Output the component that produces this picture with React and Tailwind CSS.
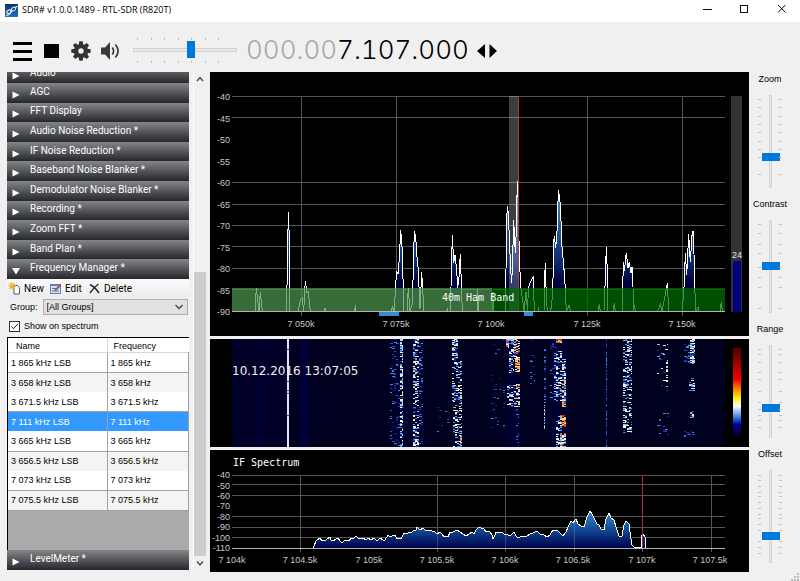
import React from "react";

const UI = "font-['Roboto','Noto_Sans',sans-serif]";

/* ---------- data ---------- */

const PLUGINS = [
  "AGC",
  "FFT Display",
  "Audio Noise Reduction *",
  "IF Noise Reduction *",
  "Baseband Noise Blanker *",
  "Demodulator Noise Blanker *",
  "Recording *",
  "Zoom FFT *",
  "Band Plan *",
];

const ENTRIES = [
  ["1 865 kHz LSB", "1 865 kHz"],
  ["3 658 kHz LSB", "3 658 kHz"],
  ["3 671.5 kHz LSB", "3 671.5 kHz"],
  ["7 111 kHz LSB", "7 111 kHz"],
  ["3 665 kHz LSB", "3 665 kHz"],
  ["3 656.5 kHz LSB", "3 656.5 kHz"],
  ["7 073 kHz LSB", "7 073 kHz"],
  ["7 075.5 kHz LSB", "7 075.5 kHz"],
];
const SELECTED = 3;

const SLIDERS = [
  { label: "Zoom", value: 31, ticks: [4, 12, 21, 29, 37, 46, 54, 62, 79] },
  { label: "Contrast", value: 51, ticks: [4, 13, 24, 33, 47, 57, 67, 88] },
  { label: "Range", value: 30, ticks: [4, 9, 17, 27, 34, 46, 57, 64, 70, 75, 82] },
  { label: "Offset", value: 26, ticks: [5, 10, 16, 22, 26, 32, 38, 44, 48, 54, 60, 71, 77, 83] },
];

const FFT_TRACE =
  "22,239 45,239 46.3,216 49,239 50.3,220 52.3,239 76.5,239 77.3,198 78.3,140 79.5,170 80,239 88.3,239 90.3,228 92.3,226 93.7,239 95.3,209 97,221 98.3,220 100.3,239 114.5,239 115,236 116,239 144.7,239 145.3,233 146,239 181.5,239 182.3,235 184.3,239 185.7,211 186.7,200 188,202 189.3,186 190.7,158 192,175 192.7,198 193.7,228 194,239 197,239 198.3,216 200,239 202.3,232 203.3,198 204.3,159 205.7,165 207,185 208.3,198 209,215 210,237 211.7,200 212.7,218 214,239 236.6,239 237.3,237 238,239 240.4,239 241,215 242.3,163 243.7,191 245,183 246.7,198 247.7,216 249,205 250.3,182 251.3,211 252.3,239 267,239 267.7,217 268.7,239 282,239 283,220 283.7,239 295.3,239 296,198 296.7,148 297.3,134 298.3,141 299.3,165 300.7,198 301.7,211 302.7,185 303.7,148 305.3,181 306.3,158 307.3,109 308.3,131 309.3,185 310.7,215 312.7,228 314,239 316,220 317.5,239 318.5,215 320,211 323.3,204 324.3,239 328,239 328.5,235 329,239 334,239 334.7,205 335.3,191 336.3,225 337.3,239 340.7,239 342.3,226 343.3,198 343.7,171 344.3,164 345.7,176 347.3,155 348.3,118 349.7,125 350.7,141 352,175 354.7,205 356.3,239 357.5,237 359,233 360.5,239 388.3,239 389.3,232 390.3,239 394,239 395.3,207 396.3,175 397.7,208 398,239 403.3,239 404.3,231 405.3,239 412.3,239 413.3,190 414.3,199 416.3,181 418,196 419.3,190 421,201 422,195 423,215 423.3,239 424.5,235 425.5,239 447.5,239 449,236 450.3,232 452,239 454.3,228 457.3,211 458.7,239 472.3,239 474.3,211 475.3,181 476.7,203 478.7,162 480.3,190 482.3,159 483.7,160 484.3,203 485.7,239 488,235 489,239 510,239 511.3,230 512.3,239 515,239";

const IF_TRACE =
  "103,98 104,96 106,91 110,88 112,91 116,90 120,87 121,90 123,91 126,89 128,88 130,91 132,93 134,91 137,90 139,91 141,88 143,89 146,86 148,88 150,89 153,88 156,90 158,88 161,90 164,88 167,91 170,88 173,90 175,90 178,85 180,87 182,86 185,85 187,89 189,88 191,89 194,83 196,84 198,83 202,82 204,80 206,80 207,77 210,80 213,78 216,81 219,80 222,81 225,82 227,84 230,82 232,84 234,87 236,86 238,87 240,82 243,82 247,80 250,82 253,84 256,86 259,84 262,82 264,84 266,80 269,77 271,78 274,79 276,82 278,81 280,82 282,85 283,89 285,85 286,82 290,83 292,82 295,85 297,84 299,86 301,85 304,82 306,86 308,88 312,86 317,86 320,84 323,83 327,81 330,84 333,84 337,87 340,85 343,80 347,80 350,83 353,86 356,82 358,77 361,71 363,73 366,69 368,74 371,76 374,77 377,67 380,61 382,64 384,68 387,74 389,75 391,79 394,80 396,69 399,63 401,68 404,70 406,77 409,86 412,86 414,75 416,71 419,74 420,82 422,95 424,97 431,97 431,86 433,84 435,87 436,98";

/* Waterfall signals: [x0, x1, y0, y1, density, palette] */
const COOL = ["#1c2f9c", "#2b55c8", "#101c78", "#4c86e0"];
const BRIGHT = ["#d8ecff", "#8fc4f4", "#3d78dc", "#ffffff", "#1b2fa4", "#5fa4ee", "#e9e9b0"];
const WARM = ["#ffffff", "#f4b46a", "#8fc4f4", "#e8491f", "#d8ecff", "#2b55c8", "#ffd65c"];
const HOT = ["#ff9d3c", "#e8491f", "#ffd65c", "#ffffff", "#c62f14", "#f4b46a"];
const SIGNALS = [
  [180, 190, 0, 108, 0.13, COOL],
  [190, 193, 0, 108, 0.62, BRIGHT],
  [203, 209, 0, 52, 0.5, BRIGHT],
  [203, 209, 52, 76, 0.22, BRIGHT],
  [203, 209, 76, 108, 0.55, BRIGHT],
  [209, 213, 0, 108, 0.18, COOL],
  [203, 206, 62, 67, 0.4, HOT],
  [242, 248, 0, 22, 0.65, BRIGHT],
  [242, 252, 22, 62, 0.34, BRIGHT],
  [243, 252, 62, 108, 0.38, BRIGHT],
  [250, 252, 96, 108, 0.7, WARM],
  [225, 240, 55, 100, 0.02, COOL],
  [281, 295, 0, 90, 0.04, COOL],
  [296, 299, 0, 9, 0.9, WARM],
  [299, 304, 0, 34, 0.4, BRIGHT],
  [304, 310, 0, 20, 0.55, WARM],
  [305, 310, 20, 33, 0.7, HOT],
  [297, 304, 46, 68, 0.42, BRIGHT],
  [304, 310, 45, 68, 0.5, WARM],
  [306, 309, 68, 108, 0.22, COOL],
  [320, 325, 0, 45, 0.1, COOL],
  [334, 336, 10, 90, 0.35, COOL],
  [334, 335, 66, 90, 0.7, BRIGHT],
  [340, 347, 0, 60, 0.12, COOL],
  [346, 352, 0, 4, 0.8, HOT],
  [344, 352, 12, 62, 0.38, BRIGHT],
  [352, 356, 20, 40, 0.6, BRIGHT],
  [352, 356, 38, 68, 0.7, WARM],
  [350, 356, 76, 88, 0.7, HOT],
  [346, 352, 76, 108, 0.35, BRIGHT],
  [350, 356, 94, 108, 0.75, WARM],
  [396, 397, 0, 108, 0.75, COOL],
  [413, 422, 0, 50, 0.45, BRIGHT],
  [413, 422, 50, 95, 0.36, BRIGHT],
  [447, 458, 5, 50, 0.05, BRIGHT],
  [456, 458, 22, 52, 0.45, BRIGHT],
  [447, 459, 74, 96, 0.08, COOL],
  [474, 480, 5, 25, 0.25, COOL],
  [480, 485, 0, 25, 0.72, BRIGHT],
  [479, 485, 39, 52, 0.35, BRIGHT],
  [480, 484, 72, 80, 0.5, BRIGHT],
  [474, 485, 90, 98, 0.12, COOL],
];

function buildSpeckles() {
  let seed = 20161210;
  const rnd = () => {
    seed = (seed * 1664525 + 1013904223) % 4294967296;
    return seed / 4294967296;
  };
  const out = [];
  SIGNALS.forEach(([x0, x1, y0, y1, density, colors]) => {
    for (let y = y0; y < y1; y += 1) {
      for (let x = x0; x < x1; x += 2) {
        if (rnd() < density) {
          const w = Math.min(x1 - x, rnd() < 0.4 ? 3 : 2);
          out.push([x, y, w, colors[Math.floor(rnd() * colors.length)]]);
        }
      }
    }
  });
  return out;
}
const SPECKLES = buildSpeckles();

/* ---------- icons ---------- */

const LogoIcon = () => (
  <svg viewBox="0 0 13 13" className="h-[13px] w-[13px]" aria-hidden="true">
    <defs>
      <linearGradient id="logo" x1="0" y1="0" x2="0" y2="1">
        <stop offset="0" stopColor="#0b2f6e" />
        <stop offset="1" stopColor="#1c72c4" />
      </linearGradient>
    </defs>
    <rect width="13" height="13" fill="url(#logo)" />
    <g fill="none" stroke="#e4f0fb" strokeWidth="1.1">
      <ellipse cx="4" cy="7.8" rx="2.2" ry="1.700" transform="rotate(-25 4 7.8)" />
      <ellipse cx="8.6" cy="5" rx="2.3" ry="1.700" transform="rotate(-35 8.6 5)" />
      <path d="M1 11.500Q5.500 11 6.500 6.500M10.500 3.500L12.500 2" />
    </g>
  </svg>
);

const GearIcon = () => (
  <svg viewBox="-10 -10 20 20" className="h-5 w-5" aria-hidden="true">
    {[0, 45, 90, 135, 180, 225, 270, 315].map((a) => (
      <path key={a} d="M-2.3 -6 L-1.7 -9.7 H1.7 L2.3 -6 Z" fill="#333" transform={`rotate(${a})`} />
    ))}
    <circle r="4.900" fill="none" stroke="#333" strokeWidth="4.400" />
  </svg>
);

const SpeakerIcon = () => (
  <svg viewBox="0 0 20 20" className="h-5 w-5" aria-hidden="true">
    <path d="M1 6.500h4L10 1v18L5 13.500H1z" fill="#3a3a3a" />
    <path d="M12.3 6.500q2.6 3.500 0 7" fill="none" stroke="#3a3a3a" strokeWidth="1.700" />
    <path d="M15.300 3.500q5.600 6.500 0 13" fill="none" stroke="#3a3a3a" strokeWidth="1.700" />
  </svg>
);

const Triangle = ({ open }) => (
  <svg viewBox="0 0 8 8" className="h-2 w-2" aria-hidden="true">
    <path d={open ? "M0 1H8L4 7.5Z" : "M0.5 0.5L7.5 4L0.5 7.5Z"} fill="#fff" />
  </svg>
);

const Chevron = ({ d }) => (
  <svg viewBox="0 0 8 8" className="h-2 w-2" aria-hidden="true">
    <path d={d} fill="none" stroke="#444" strokeWidth="1.300" />
  </svg>
);

/* ---------- shell ---------- */

const WINDOW_BUTTON = "grid h-[18px] w-[37px] place-items-center";

function TitleBar() {
  return (
    <header className="flex h-[22px] bg-white pl-[5px]">
      <div className="flex flex-1 items-center gap-1 pb-0.5">
        <LogoIcon />
        <h1 className="font-['Open_Sans','Noto_Sans',sans-serif] text-[9px] leading-4 text-black">SDR# v1.0.0.1489 - RTL-SDR (R820T)</h1>
      </div>
      <button type="button" aria-label="Minimize" className={WINDOW_BUTTON}>
        <svg viewBox="0 0 10 10" className="h-2.5 w-2.5"><path d="M0 5.500h9" stroke="#111" /></svg>
      </button>
      <button type="button" aria-label="Maximize" className={WINDOW_BUTTON}>
        <svg viewBox="0 0 10 10" className="h-2.5 w-2.5"><rect x="0.500" y="1.500" width="7" height="7" fill="none" stroke="#111" /></svg>
      </button>
      <button type="button" aria-label="Close" className={WINDOW_BUTTON}>
        <svg viewBox="0 0 10 10" className="h-2.5 w-2.5"><path d="M1 1l7.500 7.500M8.500 1L1 8.500" stroke="#111" /></svg>
      </button>
    </header>
  );
}

const VOLUME_TICKS = [4, 18, 31, 45, 58, 72, 85];
const VolumeTicks = () => (
  <svg viewBox="0 0 104 2" className="h-0.5 w-[104px]" aria-hidden="true">
    {VOLUME_TICKS.map((x) => <rect key={x} x={x} width="1" height="2" fill="#bcbcbc" />)}
  </svg>
);

function Toolbar() {
  return (
    <div className="flex h-[50px] items-center pt-2 pl-[13px]">
      <button type="button" aria-label="Menu" className="flex w-[19px] flex-col gap-[5px]">
        <span className="h-[3px] bg-black" />
        <span className="h-[3px] bg-black" />
        <span className="h-[3px] bg-black" />
      </button>
      <button type="button" aria-label="Stop" className="ml-3 h-3.5 w-[15px] bg-black" />
      <button type="button" aria-label="Settings" className="ml-3"><GearIcon /></button>
      <button type="button" aria-label="Mute" className="ml-[9px]"><SpeakerIcon /></button>
      <div className="ml-[13px] flex flex-col gap-[2px] pb-0.5">
        <VolumeTicks />
        <input
          type="range"
          aria-label="Volume"
          defaultValue="56"
          className="block h-[17px] w-[104px] appearance-none bg-transparent [&::-webkit-slider-runnable-track]:h-1 [&::-webkit-slider-runnable-track]:border [&::-webkit-slider-runnable-track]:border-[#d2d2d2] [&::-webkit-slider-runnable-track]:bg-[#e7e7e7] [&::-webkit-slider-thumb]:mt-[-8px] [&::-webkit-slider-thumb]:h-[17px] [&::-webkit-slider-thumb]:w-2 [&::-webkit-slider-thumb]:appearance-none [&::-webkit-slider-thumb]:bg-[#0078d7]"
        />
        <VolumeTicks />
      </div>
      <output aria-label="Frequency" className="ml-[9px] pb-0.5 font-['Inter','DejaVu_Sans',sans-serif] text-[26px] leading-7 font-light whitespace-nowrap text-black tabular-nums">
        <span className="text-[#a8a8a8]">000.00</span>7.107.000
      </output>
      <button type="button" aria-label="Tuning style" className="ml-2">
        <svg viewBox="0 0 20 14" className="h-3.5 w-5"><path d="M8 0v14L0 7zM12.500 0v14l7.500-7z" fill="#000" /></svg>
      </button>
    </div>
  );
}

const BAR = "flex items-center bg-linear-to-b from-[#85868a] via-[#55565a] to-[#26282d] pl-[5px] text-left text-[10px] text-white";

function PluginHeader({ name, open }) {
  return (
    <button type="button" aria-expanded={!!open} className={`${BAR} h-full w-full ${UI}`}>
      <span className="pt-1"><Triangle open={open} /></span>
      <span className="pb-0.5 pl-2.5 leading-3">{name}</span>
    </button>
  );
}

function FrequencyManager() {
  return (
    <section aria-label="Frequency Manager" className="flex flex-1 flex-col text-[9px] leading-3 text-black">
      <div className={`flex h-[19px] items-center bg-linear-to-b from-[#fafafa] to-[#ececec] pl-[1px] text-[10px] ${UI}`}>
        <button type="button" className="flex items-center gap-[3px]">
          <svg viewBox="0 0 13 13" className="h-[13px] w-[13px]" aria-hidden="true">
            <path d="M6 3.500h3.500l2 2V12H6z" fill="#fff" stroke="#4a5a78" />
            <path d="M4 0v8M0 4h8M1.200 1.200l5.600 5.600M6.800 1.200L1.200 6.800" stroke="#eeb52c" strokeWidth="1.200" />
          </svg>
          New
        </button>
        <button type="button" className="ml-[6px] flex items-center gap-[3px]">
          <svg viewBox="0 0 12 12" className="h-3 w-3" aria-hidden="true">
            <rect x="0.500" y="1.500" width="10" height="9" fill="#d3e0f6" stroke="#5f80bd" />
            <path d="M0 2h11" stroke="#5f80bd" strokeWidth="2" />
            <path d="M2 5.500h4M2 8h7" stroke="#5573ad" />
            <path d="M5 7.500L10.500 2" stroke="#b8503f" strokeWidth="2" />
          </svg>
          Edit
        </button>
        <button type="button" className="ml-[7px] flex items-center gap-1">
          <svg viewBox="0 0 11 11" className="h-[11px] w-[11px]" aria-hidden="true">
            <path d="M1 1.500Q6 4 10 10M9.500 1Q5 4 1 10" fill="none" stroke="#222" strokeWidth="1.400" />
          </svg>
          Delete
        </button>
      </div>
      <div className="flex h-[18px] items-center gap-[5px] pl-[3px] font-['Liberation_Sans',Arial,sans-serif]">
        <label htmlFor="group">Group:</label>
        <div className="mr-[1px] flex h-4 flex-1 items-center border border-[#adadad] bg-[#e1e1e1] pr-1">
          <select id="group" className="flex-1 appearance-none bg-transparent pl-[3px]" defaultValue="all">
            <option value="all">[All Groups]</option>
          </select>
          <Chevron d="M0.500 2L4 5.500L7.500 2" />
        </div>
      </div>
      <label className="flex h-[20px] items-center gap-1 pl-0.5 font-['Liberation_Sans',Arial,sans-serif]">
        <span className="grid place-items-center">
          <input type="checkbox" defaultChecked className="col-start-1 row-start-1 h-[11px] w-[11px] appearance-none border border-[#333] bg-white" />
          <svg viewBox="0 0 11 11" className="pointer-events-none col-start-1 row-start-1 h-[11px] w-[11px]" aria-hidden="true">
            <path d="M2.500 5.500l2 2.200L8.800 3" fill="none" stroke="#222" />
          </svg>
        </span>
        Show on spectrum
      </label>
      <div className="mt-[1px] flex-1 border-t border-l border-black bg-[#ababab] font-['Liberation_Sans',Arial,sans-serif]">
        <table className="h-[173px] w-full table-fixed border-collapse bg-white">
          <thead>
            <tr>
              <th className="w-[99px] border-r border-[#d8d8d8] pt-0.5 pl-2 text-left font-normal">Name</th>
              <th className="pt-0.5 pl-[6px] text-left font-normal">Frequency</th>
            </tr>
          </thead>
          <tbody className="border-t border-[#d8d8d8]">
            {ENTRIES.map(([name, freq], i) => {
              const rule = i % 2 === 0 || i === ENTRIES.length - 1 ? "border-b" : "";
              return (
                <tr
                  key={name}
                  className={i === SELECTED ? "bg-[#3399ff] text-white" : i % 2 ? "bg-[#f4f4f4]" : "bg-white"}
                >
                  <td className={`border-r border-[#a0a0a0] pl-[3px] ${rule}`}>{name}</td>
                  <td className={`border-r border-[#a0a0a0] pl-[3px] ${rule}`}>{freq}</td>
                </tr>
              );
            })}
          </tbody>
        </table>
      </div>
    </section>
  );
}

function Sidebar() {
  return (
    <aside className="ml-[7px] flex w-[182px] flex-col overflow-hidden">
      <div className="flex h-[11px] flex-col justify-end overflow-hidden">
        <div className="h-[19px] shrink-0"><PluginHeader name="Audio" /></div>
      </div>
      <div className="grid h-[196px] auto-rows-fr">
        {PLUGINS.map((name) => <PluginHeader key={name} name={name} />)}
        <PluginHeader name="Frequency Manager *" open />
      </div>
      <FrequencyManager />
      <div className="h-5"><PluginHeader name="LevelMeter *" /></div>
    </aside>
  );
}

function ScrollBar() {
  return (
    <div className="ml-[4px] flex w-[13px] flex-col items-center border-l border-white" aria-hidden="true">
      <div className="grid h-[14px] place-items-center"><Chevron d="M1 6L4 2.500L7 6" /></div>
      <div className="flex w-full flex-1 flex-col pt-[186px]"><div className="flex-1 bg-[#cdcdcd]" /></div>
      <div className="grid h-[14px] place-items-center"><Chevron d="M1 2.500L4 6L7 2.500" /></div>
    </div>
  );
}

/* ---------- displays ---------- */

const AXIS_FONT = "font-['Liberation_Sans',Arial,sans-serif] text-[9px] fill-[#c8c8c8]";
const MONO = "font-['DejaVu_Sans_Mono',monospace] text-[10px] fill-white";

function Spectrum() {
  const dbLabels = [-40, -45, -50, -55, -60, -65, -70, -75, -80, -85, -90];
  return (
    <svg viewBox="0 0 539 264" className="block w-full bg-black" role="img" aria-label="Spectrum analyzer">
      <defs>
        <linearGradient id="fft" gradientUnits="userSpaceOnUse" x1="0" y1="100" x2="0" y2="239">
          <stop offset="0" stopColor="#6fb6ee" />
          <stop offset="0.300" stopColor="#2f6da8" />
          <stop offset="0.650" stopColor="#0b2a70" />
          <stop offset="0.800" stopColor="#00003c" />
          <stop offset="1" stopColor="#000020" />
        </linearGradient>
      </defs>
      <g stroke="#555" strokeWidth="1">
        {[24.5, 45.5, 110.5, 132.5, 153.5, 174.5, 196.5, 217.5].map((y) => <line key={y} x1="22" x2="515" y1={y} y2={y} />)}
        {[91.5, 186.5, 377.5, 472.5].map((x) => <line key={x} x1={x} x2={x} y1="24" y2="244" />)}
      </g>
      <polygon points={`22,239 ${FFT_TRACE}`} fill="url(#fft)" />
      <polyline points={FFT_TRACE} fill="none" stroke="#fff" strokeWidth="1" shapeRendering="crispEdges" />
      <rect x="299" y="24" width="9" height="215" fill="#fff" fillOpacity="0.24" />
      <rect x="308" y="24" width="1" height="215" fill="#b03a3a" />
      <rect x="22" y="216" width="260" height="23" fill="#4c944c" fillOpacity="0.72" />
      <rect x="282" y="216" width="233" height="23" fill="#006c00" fillOpacity="0.72" />
      <text x="232" y="229" className={MONO}>40m Ham Band</text>
      <rect x="22" y="239" width="493" height="1" fill="#b4b4b4" />
      <rect x="169" y="240" width="20" height="4" fill="#3a8ad6" />
      <rect x="314" y="240" width="9" height="4" fill="#3a8ad6" />
      <g className={AXIS_FONT}>
        {dbLabels.map((v, i) => (
          <text key={v} x="20" y={Math.round(28 + i * 21.5)} textAnchor="end">{v}</text>
        ))}
        {[["7 050k", 91], ["7 075k", 186], ["7 100k", 281], ["7 125k", 377], ["7 150k", 472]].map(([t, x]) => (
          <text key={t} x={x} y="255" textAnchor="middle">{t}</text>
        ))}
      </g>
      <rect x="521" y="24" width="11" height="216" fill="#333" />
      <rect x="523" y="189" width="8" height="51" fill="#000080" />
      <text x="527" y="186" textAnchor="middle" className="fill-[#e8e8e8] font-['Liberation_Sans',Arial,sans-serif] text-[9px]">24</text>
    </svg>
  );
}

function Waterfall() {
  return (
    <svg viewBox="0 0 539 108" className="block w-full bg-black" role="img" aria-label="Waterfall" shapeRendering="crispEdges">
      <defs>
        <linearGradient id="scale" x1="0" y1="0" x2="0" y2="1">
          <stop offset="0" stopColor="#500000" />
          <stop offset="0.350" stopColor="#f00000" />
          <stop offset="0.560" stopColor="#ffe800" />
          <stop offset="0.660" stopColor="#ffffff" />
          <stop offset="0.780" stopColor="#3c86e8" />
          <stop offset="0.870" stopColor="#0000a0" />
          <stop offset="1" stopColor="#000020" />
        </linearGradient>
      </defs>
      <rect x="22" width="493" height="108" fill="#00001f" />
      <rect x="22" width="58" height="108" fill="#000028" />
      <rect x="89" width="11" height="108" fill="#000036" />
      <rect x="48" width="5" height="108" fill="#000032" />
      <rect x="180" width="34" height="108" fill="#000028" />
      <rect x="296" width="14" height="108" fill="#000030" />
      <rect x="340" width="18" height="108" fill="#000030" />
      <rect x="77" width="2" height="108" fill="#dbe8ff" />
      {[10, 42, 51, 54, 76].map((y) => <rect key={y} x="77" y={y} width="2" height="1" fill="#2b3f9c" />)}
      {SPECKLES.map(([x, y, w, c], i) => <rect key={i} x={x} y={y} width={w} height="1" fill={c} />)}
      <rect x="523" y="9" width="8" height="88" fill="url(#scale)" />
      <text x="22" y="36" className="fill-[#f0f0f0] font-['DejaVu_Sans',sans-serif] text-[12px]">10.12.2016 13:07:05</text>
    </svg>
  );
}

function IfSpectrum() {
  const db = [[-40, 28], [-50, 39], [-60, 49], [-70, 59], [-80, 70], [-90, 80], [-100, 91], [-110, 101]];
  return (
    <svg viewBox="0 0 539 122" className="block w-full bg-black" role="img" aria-label="IF Spectrum">
      <defs>
        <linearGradient id="ifg" gradientUnits="userSpaceOnUse" x1="0" y1="58" x2="0" y2="98">
          <stop offset="0" stopColor="#3f93d6" />
          <stop offset="0.500" stopColor="#14509c" />
          <stop offset="1" stopColor="#00004c" />
        </linearGradient>
      </defs>
      <text x="23" y="16" className={MONO}>IF Spectrum</text>
      <g stroke="#555" strokeWidth="1">
        {[25.5, 34.5, 45.5, 66.5, 77.5, 87.5].map((y) => <line key={y} x1="22" x2="515" y1={y} y2={y} />)}
        {[90.5, 227.5, 295.5, 364.5, 432.5, 501.5].map((x) => <line key={x} x1={x} x2={x} y1="25" y2="102" />)}
      </g>
      <polygon points={`103,98 ${IF_TRACE}`} fill="url(#ifg)" />
      <g stroke="#8fa8c8" strokeOpacity="0.3">
        <line x1="227.500" x2="227.500" y1="84" y2="98" />
        <line x1="295.500" x2="295.500" y1="85" y2="98" />
        <line x1="364.500" x2="364.500" y1="72" y2="98" />
      </g>
      <polyline points={IF_TRACE} fill="none" stroke="#fff" strokeWidth="1" shapeRendering="crispEdges" />
      <rect x="432" y="25" width="1" height="73" fill="#b8283c" />
      <rect x="22" y="98" width="493" height="1" fill="#b4b4b4" />
      <g className={AXIS_FONT}>
        {db.map(([v, y]) => <text key={v} x="20" y={y} textAnchor="end">{v}</text>)}
        {[["7 104k", 22], ["7 104.5k", 90], ["7 105k", 159], ["7 105.5k", 227], ["7 106k", 295], ["7 106.5k", 363], ["7 107k", 432], ["7 107.5k", 500]].map(([t, x]) => (
          <text key={t} x={x} y="113" textAnchor="middle">{t}</text>
        ))}
      </g>
    </svg>
  );
}

/* ---------- right-hand controls ---------- */

const SideTicks = ({ ticks }) => (
  <svg viewBox="0 0 3 93" className="h-[93px] w-[3px]" aria-hidden="true">
    {ticks.map((y) => <rect key={y} y={y} width="3" height="1" fill="#c0c0c0" />)}
  </svg>
);

function Controls() {
  return (
    <div className="flex w-[51px] flex-col pr-[9px]">
      {SLIDERS.map(({ label, value, ticks }) => (
        <div key={label} className="flex h-[125px] flex-col items-center gap-2">
          <label htmlFor={label} className="h-[15px] font-['Liberation_Sans',Arial,sans-serif] text-[9px] leading-[15px] text-black">{label}</label>
          <div className="flex">
            <SideTicks ticks={ticks} />
            <input
              id={label}
              type="range"
              defaultValue={value}
              className="block h-[93px] w-[18px] appearance-none bg-transparent [direction:rtl] [writing-mode:vertical-lr] [&::-webkit-slider-runnable-track]:w-[3px] [&::-webkit-slider-runnable-track]:border [&::-webkit-slider-runnable-track]:border-[#d2d2d2] [&::-webkit-slider-runnable-track]:bg-[#e7e7e7] [&::-webkit-slider-thumb]:ml-[-8px] [&::-webkit-slider-thumb]:h-2 [&::-webkit-slider-thumb]:w-[18px] [&::-webkit-slider-thumb]:appearance-none [&::-webkit-slider-thumb]:bg-[#0078d7]"
            />
            <SideTicks ticks={ticks} />
          </div>
        </div>
      ))}
    </div>
  );
}

export default function App() {
  return (
    <div className="flex min-h-screen flex-col bg-[#f0f0f0]">
      <TitleBar />
      <Toolbar />
      <main className="flex flex-1">
        <div className="flex pb-[11px]">
          <Sidebar />
          <ScrollBar />
        </div>
        <div className="ml-[4px] flex min-w-0 flex-1 flex-col gap-[3px]">
          <Spectrum />
          <Waterfall />
          <IfSpectrum />
        </div>
        <div className="flex flex-col justify-between">
          <Controls />
          <svg viewBox="0 0 8 8" className="mr-[1px] h-2 w-2 self-end" aria-hidden="true">
            <path d="M6 0h2v2H6zM3 3h2v2H3zM6 3h2v2H6zM0 6h2v2H0zM3 6h2v2H3zM6 6h2v2H6z" fill="#b8b8b8" />
          </svg>
        </div>
      </main>
    </div>
  );
}
